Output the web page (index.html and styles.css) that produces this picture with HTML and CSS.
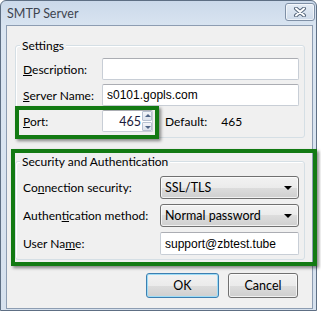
FILE: index.html
```html
<!DOCTYPE html>
<html lang="en">
<head>
    <meta charset="UTF-8">
    <title>SMTP Server</title>
    <link rel="stylesheet" href="styles.css">
</head>
<body>

<div class="window">
    <div class="titlebar">
        <span class="title">SMTP Server</span>
        <button class="close" aria-label="Close">
            <svg width="14" height="10" viewBox="0 0 14 10">
                <path d="M3 1.5 L11 8.5 M11 1.5 L3 8.5" stroke="#56677c" stroke-width="4" stroke-linecap="round"/>
                <path d="M3 1.5 L11 8.5 M11 1.5 L3 8.5" stroke="#fff" stroke-width="2" stroke-linecap="round"/>
            </svg>
        </button>
    </div>

    <div class="client">
        <div class="group settings">
            <div class="group-title">Settings</div>
            <div class="rows">
                <div class="row">
                    <label for="desc"><u>D</u>escription:</label>
                    <input type="text" id="desc" class="text">
                </div>
                <div class="row">
                    <label for="server"><u>S</u>erver Name:</label>
                    <input type="text" id="server" class="text" value="s0101.gopls.com">
                </div>
                <div class="row">
                    <label for="port"><u>P</u>ort:</label>
                    <div class="port-line">
                        <div class="spin">
                            <input type="text" id="port" class="text port" value="465">
                            <div class="spin-buttons">
                                <span class="spin-btn up"></span>
                                <span class="spin-btn down"></span>
                            </div>
                        </div>
                        <span class="default">Default:</span>
                        <span class="default-value">465</span>
                    </div>
                </div>
            </div>
        </div>

        <div class="group security">
            <div class="group-title">Security and Authentication</div>
            <div class="rows">
                <div class="row">
                    <label>Co<u>n</u>nection security:</label>
                    <div class="combo">SSL/TLS<span class="arrow"></span></div>
                </div>
                <div class="row">
                    <label>Authen<u>t</u>ication method:</label>
                    <div class="combo">Normal password<span class="arrow"></span></div>
                </div>
                <div class="row">
                    <label for="user">User Na<u>m</u>e:</label>
                    <input type="text" id="user" class="text" value="support@zbtest.tube">
                </div>
            </div>
        </div>

        <div class="buttons">
            <button class="btn default-btn">OK</button>
            <button class="btn">Cancel</button>
        </div>
    </div>

    <!-- annotation highlights -->
    <div class="mark mark-port"></div>
    <div class="mark mark-security"></div>
</div>

</body>
</html>
```

FILE: styles.css
```css
body {
    margin: 0;
    background: #fff;
    font-family: 'Lato', 'Noto Sans', sans-serif;
    font-size: 12px;
    color: #000;
}
.window {
    position: relative;
    width: 315px;
    height: 309px;
    border: 1px solid #5e6f84;
    border-radius: 6px 6px 0 0;
    background: linear-gradient(#cbd9ea, #dbe6f2 30px, #d6e1ee);
}
.titlebar {
    height: 24px;
    display: flex;
    align-items: center;
    justify-content: space-between;
    padding: 0 1px 0 6px;
}
.title {
    color: #3e4550;
    font-size: 12.5px;
}
.close {
    width: 30px;
    height: 18px;
    margin-top: -2px;
    border: 1px solid #7f90a6;
    border-radius: 3px;
    background: linear-gradient(#e4ecf5, #cfdbea);
    box-shadow: inset 0 0 0 1px rgba(255, 255, 255, 0.6);
    display: flex;
    align-items: center;
    justify-content: center;
    padding: 0;
}
.client {
    margin: 0 3px 0 5px;
    height: 282px;
    border: 1px solid #8d9db2;
    background: #f0f0f0;
    display: flex;
    flex-direction: column;
}
.group {
    margin: 19px 7px 0 8px;
    border: 1px solid #d5dfe5;
    border-radius: 3px;
    box-shadow: inset 1px 1px 0 #fff;
    padding: 0 5px 5px 7px;
}
.group-title {
    width: fit-content;
    margin: -8px 0 0 -3px;
    padding: 0 2px;
    line-height: 15px;
    background: #f0f0f0;
}
.rows {
    display: flex;
    flex-direction: column;
    gap: 4px;
    margin-top: 5px;
}
.row {
    display: grid;
    grid-template-columns: 79px 1fr;
    align-items: center;
    height: 22px;
}
.text {
    box-sizing: border-box;
    height: 22px;
    width: 100%;
    border: 1px solid #c8ced6;
    border-top-color: #abadb3;
    border-radius: 2px;
    background: #fff;
    font-family: 'Liberation Sans', Arial, sans-serif;
    font-size: 12px;
    padding: 0 4px;
    color: #000;
    outline: none;
}
.port-line {
    display: flex;
    align-items: center;
}
.spin {
    display: flex;
    width: 51px;
    height: 22px;
    box-sizing: border-box;
    border: 1px solid #c8ced6;
    border-top-color: #abadb3;
    border-radius: 2px;
    background: #fff;
}
.spin .port {
    border: none;
    height: 20px;
    width: 39px;
    text-align: right;
    padding: 0 1px 0 0;
    font-family: 'Lato', 'Noto Sans', sans-serif;
    font-size: 12.5px;
    color: #1a1a3a;
}
.spin-buttons {
    display: flex;
    flex-direction: column;
    gap: 1px;
    width: 10px;
    padding: 0 0 0 0;
}
.spin-btn {
    flex: 1;
    border: 1px solid #b7c1d1;
    border-radius: 1px;
    background: linear-gradient(#f3f5f9, #dde3ec);
    position: relative;
}
.spin-btn::after {
    content: "";
    position: absolute;
    left: 2px;
    border-left: 3px solid transparent;
    border-right: 3px solid transparent;
}
.spin-btn.up::after {
    top: 2px;
    border-bottom: 3px solid #4f6486;
}
.spin-btn.down::after {
    top: 3px;
    border-top: 3px solid #4f6486;
}
.default {
    margin-left: 12px;
}
.default-value {
    margin-left: 14px;
}
.security {
    margin-top: 23px;
    padding-bottom: 4px;
}
.security .rows {
    margin-top: 7px;
    gap: 5px;
}
.security .row {
    grid-template-columns: 137px 1fr;
    height: 23px;
}
.security .text {
    height: 23px;
}
.combo {
    box-sizing: border-box;
    height: 23px;
    border: 1px solid #707070;
    border-radius: 3px;
    background: linear-gradient(#f2f2f2, #ebebeb 50%, #dddddd 50%, #cfcfcf);
    box-shadow: inset 0 0 0 1px rgba(255, 255, 255, 0.7);
    display: flex;
    align-items: center;
    justify-content: space-between;
    padding: 0 6px 0 4px;
    font-size: 12.5px;
}
.arrow {
    width: 0;
    height: 0;
    border-left: 4px solid transparent;
    border-right: 4px solid transparent;
    border-top: 4px solid #000;
}
.buttons {
    display: flex;
    justify-content: flex-end;
    gap: 9px;
    margin: 13px 14px 0 0;
}
.btn {
    height: 25px;
    width: 70px;
    border: 1px solid #707070;
    border-radius: 3px;
    background: linear-gradient(#f2f2f2, #ebebeb 50%, #dddddd 50%, #cfcfcf);
    box-shadow: inset 0 0 0 1px rgba(255, 255, 255, 0.7);
    font-family: 'Lato', 'Noto Sans', sans-serif;
    font-size: 12.5px;
    color: #000;
    padding: 0;
}
.default-btn {
    width: 73px;
    border-color: #3c7fb1;
    box-shadow: inset 0 0 0 1px #9ddcf6;
}
.mark {
    position: absolute;
    border: 4px solid #137a13;
    box-shadow: 2px 2px 3px rgba(0, 0, 0, 0.45);
}
.mark-port {
    left: 14px;
    top: 105px;
    width: 136px;
    height: 25px;
}
.mark-security {
    left: 10px;
    top: 148px;
    width: 298px;
    height: 109px;
}
```
